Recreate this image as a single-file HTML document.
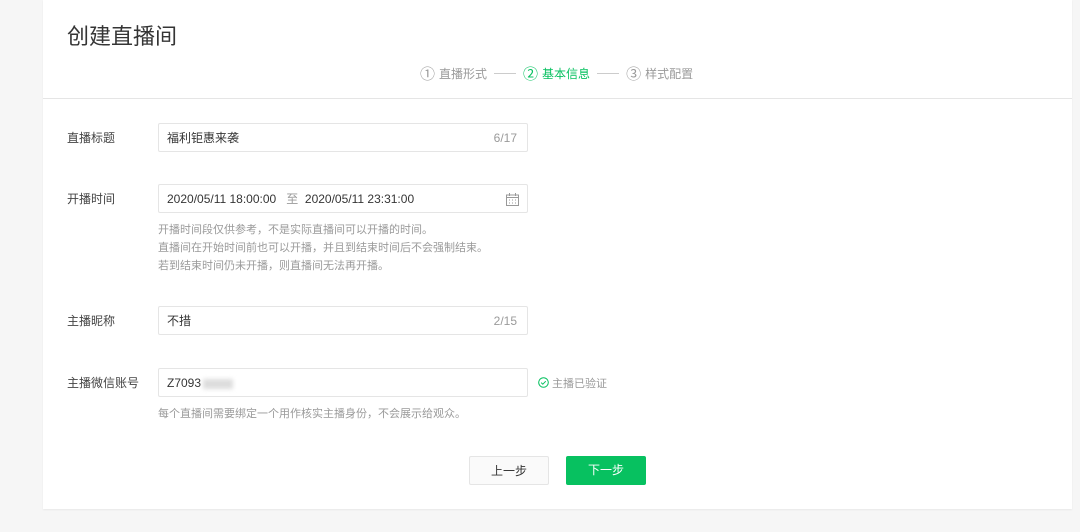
<!DOCTYPE html>
<html><head><meta charset="utf-8"><style>
*{margin:0;padding:0;box-sizing:border-box}
body{width:1080px;height:532px;background:#f6f6f6;font-family:"Liberation Sans","Noto Sans CJK SC",sans-serif;position:relative;overflow:hidden;color:#353535}
.card{position:absolute;left:43px;top:0;width:1029px;height:509px;background:#fff;box-shadow:0 1px 2px rgba(0,0,0,.06)}
.sep{position:absolute;left:43px;top:98px;width:1029px;height:1px;background:#e5e5e5}
.h1{position:absolute;left:67px;top:19px;font-size:22px;color:#353535}
.steps{position:absolute;left:420px;top:63px;font-size:12px;color:#9a9a9a;white-space:nowrap}
.steps span{display:inline-block;vertical-align:middle}
.steps .c{font-size:15px;margin-right:4px}
.steps .ln{width:22px;height:1px;background:#ccc;margin:0 7px}
.steps .on{color:#07c160}
.lbl{position:absolute;left:67px;font-size:12px;color:#444}
.inp{position:absolute;left:158px;width:370px;height:29px;border:1px solid #e5e5e5;border-radius:2px;font-size:12px;padding-left:8px;line-height:29px;color:#353535}
.cnt{position:absolute;right:10px;top:0;color:#9a9a9a}
.tip{position:absolute;left:158px;font-size:11px;color:#9a9a9a;line-height:18px}
.btn{position:absolute;top:456px;height:29px;width:80px;font-size:12px;text-align:center;line-height:29px;border-radius:2px}
</style></head><body>
<div class="card"></div>
<div class="sep"></div>
<div class="h1">创建直播间</div>
<div class="steps"><span class="c">①</span><span>直播形式</span><span class="ln"></span><span class="c on">②</span><span class="on">基本信息</span><span class="ln"></span><span class="c">③</span><span>样式配置</span></div>

<div class="lbl" style="top:129px">直播标题</div>
<div class="inp" style="top:123px">福利钜惠来袭<span class="cnt">6/17</span></div>

<div class="lbl" style="top:190px">开播时间</div>
<div class="inp" style="top:184px">2020/05/11 18:00:00 &nbsp;&nbsp;<span style="color:#9a9a9a">至</span>&nbsp; 2020/05/11 23:31:00
<svg style="position:absolute;right:8px;top:8px" width="13" height="13" viewBox="0 0 13 13" fill="none" stroke="#999" stroke-width="1"><rect x="0.5" y="2" width="12" height="10.5"/><line x1="0.5" y1="4.5" x2="12.5" y2="4.5"/><line x1="3.5" y1="0" x2="3.5" y2="3"/><line x1="9.5" y1="0" x2="9.5" y2="3"/><path d="M3 7h1M6 7h1M9 7h1M3 10h1M6 10h1M9 10h1"/></svg></div>
<div class="tip" style="top:221px">开播时间段仅供参考，不是实际直播间可以开播的时间。<br>直播间在开始时间前也可以开播，并且到结束时间后不会强制结束。<br>若到结束时间仍未开播，则直播间无法再开播。</div>

<div class="lbl" style="top:312px">主播昵称</div>
<div class="inp" style="top:306px">不措<span class="cnt">2/15</span></div>

<div class="lbl" style="top:374px">主播微信账号</div>
<div class="inp" style="top:368px">Z7093<span style="display:inline-block;width:30px;height:10px;background:#ddd;filter:blur(2px);vertical-align:middle;margin-left:2px"></span></div>
<div style="position:absolute;left:538px;top:375px;font-size:11px;color:#9a9a9a"><svg width="11" height="11" viewBox="0 0 11 11" style="vertical-align:-1px"><circle cx="5.5" cy="5.5" r="4.8" fill="none" stroke="#07c160"/><path d="M3.2 5.6l1.6 1.6 3-3" fill="none" stroke="#07c160"/></svg> 主播已验证</div>
<div class="tip" style="top:405px">每个直播间需要绑定一个用作核实主播身份，不会展示给观众。</div>

<div class="btn" style="left:469px;border:1px solid #e5e5e5;background:#fafafa;color:#353535">上一步</div>
<div class="btn" style="left:566px;background:#07c160;color:#fff">下一步</div>
</body></html>
